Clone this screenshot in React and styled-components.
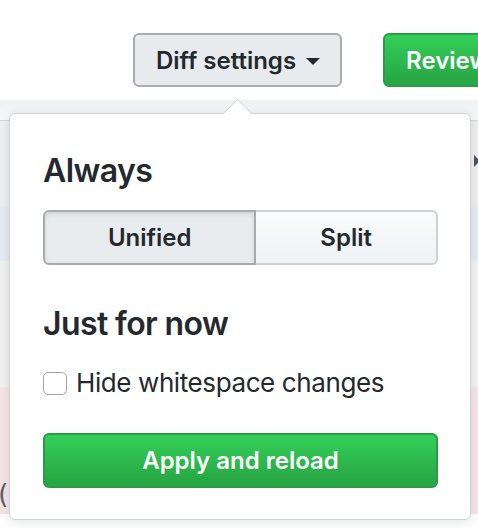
import React, { useState } from 'react';
import styled, { createGlobalStyle } from 'styled-components';

const GlobalStyle = createGlobalStyle`
  html, body {
    margin: 0;
    padding: 0;
    background: #fff;
    overflow: hidden;
  }
  body {
    font-family: Inter, "Noto Sans", "Liberation Sans", sans-serif;
    color: #24292e;
  }
`;

const Page = styled.div`
  position: relative;
  width: 478px;
  height: 528px;
  overflow: hidden;
`;

const Toolbar = styled.div`
  display: flex;
  align-items: flex-start;
  gap: 41px;
  height: 100px;
  box-sizing: border-box;
  padding: 33px 0 0 133px;
  white-space: nowrap;
  background: #fff;
`;

const Btn = styled.button`
  display: inline-flex;
  align-items: center;
  gap: 10px;
  height: 54px;
  box-sizing: border-box;
  padding: 0 20px 0 21px;
  border-radius: 6px;
  font-family: inherit;
  font-size: 24px;
  font-weight: 600;
  flex-shrink: 0;
  cursor: pointer;
  color: ${(p) => (p.primary ? '#fff' : '#24292e')};
  border: 2px solid ${(p) => (p.primary ? '#2a9c45' : '#a9acb0')};
  background: ${(p) =>
    p.primary ? 'linear-gradient(#34d058, #28a745 90%)' : '#e8ebee'};
`;

const Caret = styled.span`
  width: 0;
  height: 0;
  border-left: 7px solid transparent;
  border-right: 7px solid transparent;
  border-top: 7px solid #24292e;
  margin-top: 2px;
`;

const Shade = styled.div`
  height: 20px;
  background: linear-gradient(#f0f1f2, #f8f8f8);
`;

const FileHeader = styled.div`
  display: flex;
  justify-content: flex-end;
  align-items: flex-start;
  height: 86px;
  box-sizing: border-box;
  padding: 32px 0 0;
  border-top: 1px solid #d4d6d8;
  background: #eeeff0;
`;

const Chevron = styled.svg`
  width: 16px;
  height: 16px;
  margin-right: -10px;
  fill: #4a535c;
`;

const Row = styled.div`
  height: ${(p) => p.h}px;
  background: ${(p) => p.bg};
  font-family: "DejaVu Sans Mono", monospace;
  font-size: 26px;
  line-height: ${(p) => p.h}px;
  color: #586069;
  text-indent: ${(p) => p.indent || 0}px;
`;

const Popover = styled.div`
  position: absolute;
  left: 9px;
  top: 113px;
  width: 462px;
  box-sizing: border-box;
  padding: 37px 32px 31px 33px;
  background: #fff;
  border: 1px solid #cfd3d7;
  border-radius: 6px;
  box-shadow: 0 2px 12px rgba(27, 31, 35, 0.12);

  &::before {
    content: '';
    position: absolute;
    top: -11px;
    left: 217px;
    width: 21px;
    height: 21px;
    box-sizing: border-box;
    background: #fff;
    border-top: 1px solid #cfd3d7;
    border-left: 1px solid #cfd3d7;
    transform: rotate(45deg);
  }
`;

const Heading = styled.h4`
  margin: ${(p) => p.mt || 0}px 0 0;
  font-size: 32px;
  line-height: 40px;
  font-weight: 600;
  letter-spacing: -0.6px;
`;

const Segmented = styled.div`
  display: flex;
  margin-top: 19px;
  height: 55px;
`;

const Segment = styled.button`
  flex: ${(p) => p.grow};
  font-family: inherit;
  font-size: 24px;
  font-weight: 600;
  color: #24292e;
  cursor: pointer;
  border: 2px solid ${(p) => (p.active ? '#a7abaf' : '#cfd2d5')};
  background: ${(p) =>
    p.active ? '#e9ecef' : 'linear-gradient(#fafbfc, #eff3f6 90%)'};
  box-shadow: ${(p) => (p.active ? 'inset 0 2px 4px rgba(27,31,35,0.12)' : 'none')};
  border-radius: 0;
  &:first-child {
    border-radius: 6px 0 0 6px;
  }
  &:last-child {
    border-radius: 0 6px 6px 0;
    border-left: none;
  }
`;

const CheckRow = styled.label`
  display: flex;
  align-items: center;
  gap: 9px;
  margin-top: 21px;
  font-size: 26px;
  letter-spacing: -0.4px;
  line-height: 36px;
  cursor: pointer;
`;

const Box = styled.span`
  width: 24px;
  height: 23px;
  box-sizing: border-box;
  border: 1px solid #a3a3a3;
  border-radius: 5px;
  background: #fff;
`;

const Apply = styled.button`
  display: block;
  width: 100%;
  height: 55px;
  margin-top: 32px;
  font-family: inherit;
  font-size: 24px;
  font-weight: 600;
  color: #fff;
  cursor: pointer;
  border: 2px solid #2a9c45;
  border-radius: 6px;
  background: linear-gradient(#34d058, #28a745 90%);
`;

export default function App() {
  const [mode, setMode] = useState('unified');
  return (
    <Page>
      <GlobalStyle />
      <Toolbar>
        <Btn>
          Diff settings <Caret />
        </Btn>
        <Btn primary>Review</Btn>
      </Toolbar>
      <Shade />
      <FileHeader>
        <Chevron viewBox="0 0 16 16">
          <path d="M2 2l6 6-6 6V2zm6 0l6 6-6 6V2z" />
        </Chevron>
      </FileHeader>
      <Row h={55} bg="#e5ecf5" />
      <Row h={126} bg="#f2f2f3" />
      <Row h={87} bg="#f6e5e7" />
      <Row h={40} bg="#f6e5e7" indent={-5}>
        (
      </Row>
      <Popover>
        <Heading>Always</Heading>
        <Segmented>
          <Segment grow="213" active={mode === 'unified'} onClick={() => setMode('unified')}>
            Unified
          </Segment>
          <Segment grow="181" active={mode === 'split'} onClick={() => setMode('split')}>
            Split
          </Segment>
        </Segmented>
        <Heading mt={39}>Just for now</Heading>
        <CheckRow>
          <Box />
          Hide whitespace changes
        </CheckRow>
        <Apply>Apply and reload</Apply>
      </Popover>
    </Page>
  );
}
